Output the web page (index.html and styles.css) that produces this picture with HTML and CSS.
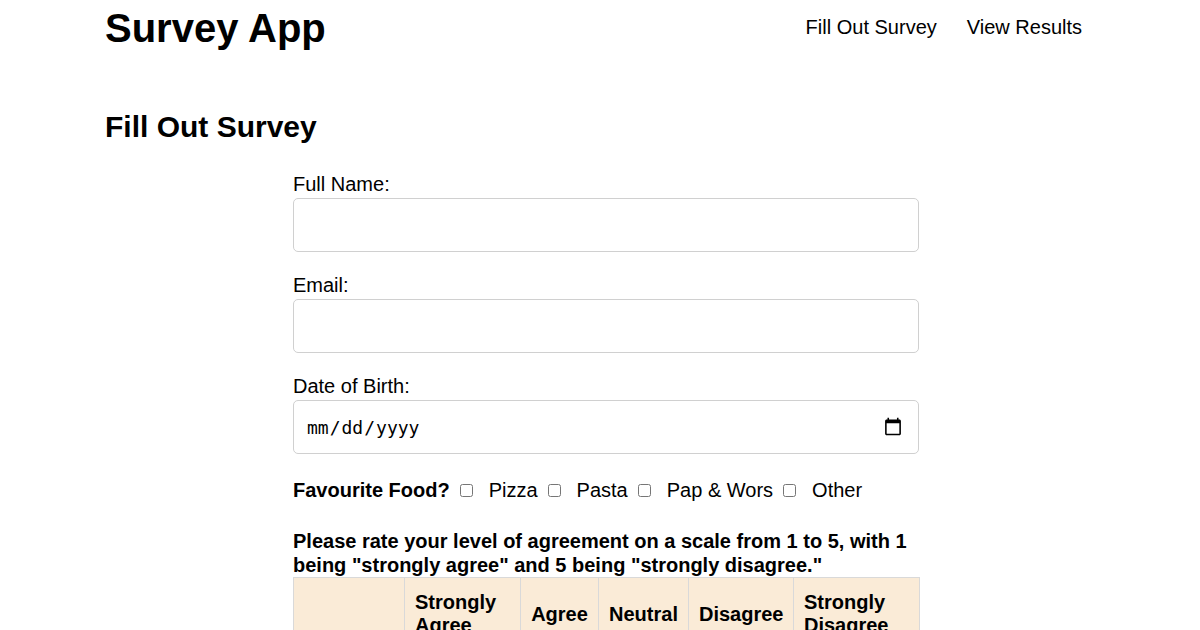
FILE: index.html
```html
<!DOCTYPE html>
<html lang="en">
<head>
<meta charset="utf-8">
<title>Survey App</title>
<link rel="stylesheet" href="styles.css">
</head>
<body>
<header class="site-header">
  <h1 class="brand">Survey App</h1>
  <nav class="nav">
    <a href="#" class="nav-link">Fill Out Survey</a>
    <a href="#" class="nav-link">View Results</a>
  </nav>
</header>
<main class="main">
  <h2 class="page-title">Fill Out Survey</h2>
  <form class="survey-form">
    <div class="field">
      <label class="field-label" for="name">Full Name:</label>
      <input class="text-input" type="text" id="name">
    </div>
    <div class="field">
      <label class="field-label" for="email">Email:</label>
      <input class="text-input" type="email" id="email">
    </div>
    <div class="field">
      <label class="field-label" for="dob">Date of Birth:</label>
      <input class="text-input date-input" type="date" id="dob">
    </div>
    <div class="food-row">
      <span class="food-label">Favourite Food?</span>
      <input type="checkbox" class="check" id="f1"><label for="f1" class="check-label">Pizza</label>
      <input type="checkbox" class="check" id="f2"><label for="f2" class="check-label">Pasta</label>
      <input type="checkbox" class="check" id="f3"><label for="f3" class="check-label">Pap &amp; Wors</label>
      <input type="checkbox" class="check" id="f4"><label for="f4" class="check-label">Other</label>
    </div>
    <p class="rate-intro">Please rate your level of agreement on a scale from 1 to 5, with 1 being "strongly agree" and 5 being "strongly disagree."</p>
    <table class="rating-table">
      <thead>
        <tr>
          <th class="c0"></th>
          <th class="c1">Strongly Agree</th>
          <th class="c2">Agree</th>
          <th class="c3">Neutral</th>
          <th class="c4">Disagree</th>
          <th class="c5">Strongly Disagree</th>
        </tr>
      </thead>
      <tbody>
        <tr>
          <td>I like to watch movies</td>
          <td><input type="radio" name="q1"></td>
          <td><input type="radio" name="q1"></td>
          <td><input type="radio" name="q1"></td>
          <td><input type="radio" name="q1"></td>
          <td><input type="radio" name="q1"></td>
        </tr>
      </tbody>
    </table>
  </form>
</main>
</body>
</html>
```

FILE: styles.css
```css
* { box-sizing: border-box; }

body {
  margin: 0;
  font-family: "Liberation Sans", Arial, sans-serif;
  color: #000;
  background: #fff;
}

.site-header {
  display: flex;
  justify-content: space-between;
  align-items: flex-start;
  padding: 5px 118px 0 105px;
}

.brand {
  margin: 0;
  font-size: 40px;
  line-height: 46px;
  font-weight: bold;
}

.nav {
  display: flex;
  gap: 30px;
  padding-top: 11px;
}

.nav-link {
  color: #000;
  text-decoration: none;
  font-size: 20px;
  line-height: 23px;
}

.main {
  padding: 0 105px;
}

.page-title {
  margin: 58px 0 0;
  font-size: 30px;
  line-height: 35px;
  font-weight: bold;
}

.survey-form {
  width: 626px;
  margin: 29px 0 0 188px;
}

.field {
  margin-bottom: 22px;
}

.field-label {
  display: block;
  font-size: 20px;
  line-height: 23px;
  margin-bottom: 2px;
}

.text-input {
  display: block;
  width: 100%;
  height: 54px;
  border: 1px solid #d0d0d0;
  border-radius: 5px;
  padding: 0 12px;
  font-size: 20px;
  font-family: "Liberation Sans", Arial, sans-serif;
  background: #fff;
}

.date-input {
  font-family: "DejaVu Sans Mono", monospace;
  font-size: 18px;
  color: #000;
}

.date-input::-webkit-calendar-picker-indicator {
  width: 20px;
  height: 20px;
  margin-right: 1px;
}

.food-row {
  display: flex;
  align-items: center;
  height: 23px;
  margin-top: 25px;
  font-size: 20px;
}

.food-label {
  font-weight: bold;
  margin-right: 10px;
}

.check {
  width: 13px;
  height: 13px;
  margin: 0 16px 0 0;
}

.check-label {
  margin-right: 10px;
}

.rate-intro {
  margin: 27px 0 0;
  font-size: 20px;
  line-height: 24px;
  font-weight: bold;
}

.rating-table {
  width: 626px;
  border-collapse: collapse;
  table-layout: fixed;
  font-size: 20px;
}

.rating-table th,
.rating-table td {
  border: 1px solid #d9d9d9;
  padding: 13px 10px 10px;
  line-height: 23px;
}

.rating-table th {
  background: #faebd7;
  font-weight: bold;
  text-align: left;
  vertical-align: middle;
}

.rating-table .c2,
.rating-table .c3,
.rating-table .c4 { text-align: center; }

.c0 { width: 111px; }
.c1 { width: 116px; }
.c2 { width: 78px; }
.c3 { width: 90px; }
.c4 { width: 105px; }
.c5 { width: 126px; }

.rating-table td {
  text-align: center;
}
```
